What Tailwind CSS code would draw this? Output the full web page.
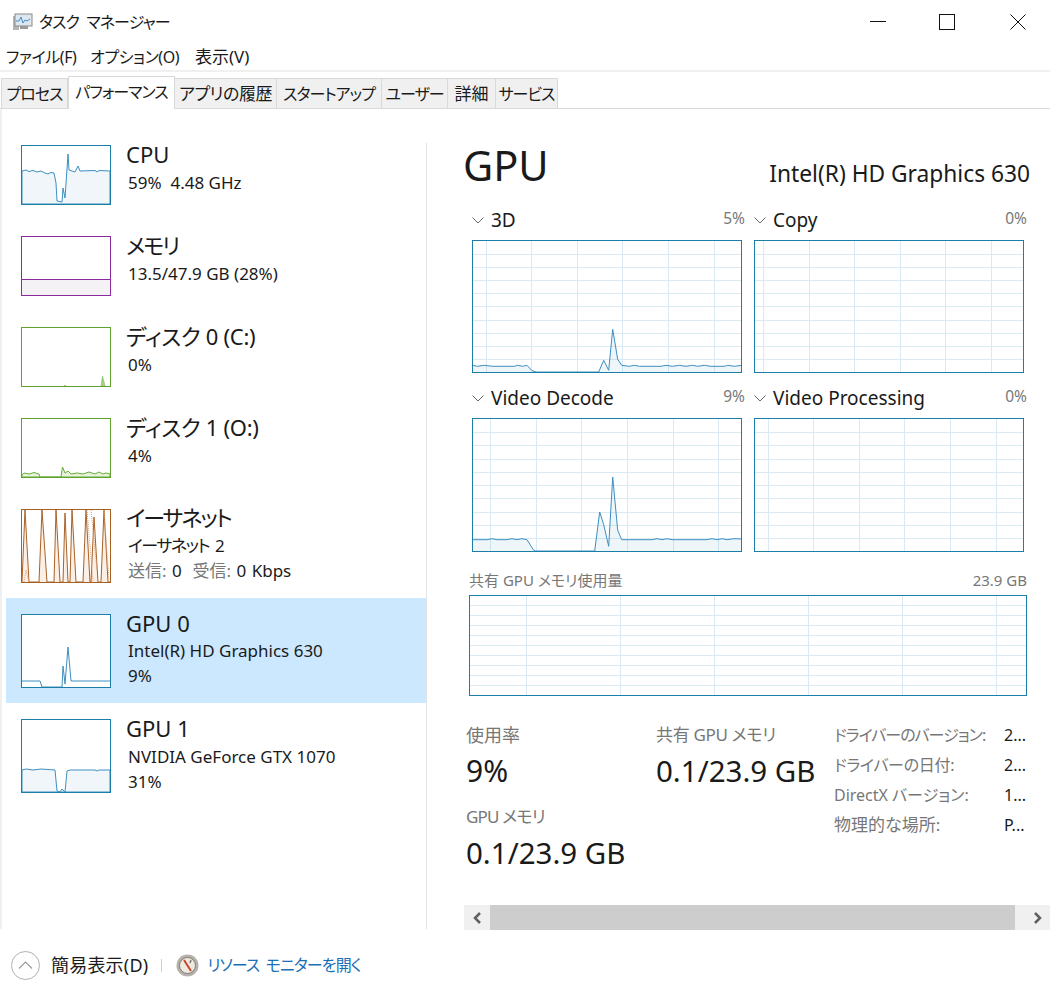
<!DOCTYPE html>
<html lang="ja">
<head>
<meta charset="UTF-8">
<title>タスク マネージャー</title>
<script src="https://cdn.jsdelivr.net/npm/@tailwindcss/browser@4"></script>
</head>
<body class="bg-white text-[#1a1a1a] font-['Noto_Sans','Noto_Sans_CJK_JP',sans-serif] [font-feature-settings:'palt']">
<div class="w-[1050px] h-[1000px] overflow-hidden flex flex-col">

  <!-- title bar -->
  <div class="h-[43px] flex items-center shrink-0">
    <svg class="ml-[12px] w-[21px] h-[21px]" viewBox="0 0 21 21">
      <rect x="1" y="5" width="6" height="14" fill="#b5b5b5"/>
      <rect x="3" y="3" width="17" height="12" fill="#dfe6ec" stroke="#8a8a8a"/>
      <path d="M4 10l3 0 2-4 2 6 2-3 2 1 3-2" fill="none" stroke="#3a8fd0"/>
      <path d="M8 15h8v3H8z" fill="#9a9a9a"/>
    </svg>
    <span class="ml-[6px] text-[16px] leading-[20px] tracking-[-0.9px] [word-spacing:4px]">タスク マネージャー</span>
    <div class="ml-auto flex items-center">
      <svg class="w-[16px] h-[16px] mr-[53px]" viewBox="0 0 16 16"><path d="M0 7.500h16" stroke="#111"/></svg>
      <svg class="w-[16px] h-[16px] mr-[55px]" viewBox="0 0 16 16"><rect x=".5" y=".5" width="15" height="15" fill="none" stroke="#111"/></svg>
      <svg class="w-[16px] h-[16px] mr-[24px]" viewBox="0 0 16 16"><path d="M.5.5l15 15M15.500.5l-15 15" stroke="#111"/></svg>
    </div>
  </div>

  <!-- menu -->
  <div class="h-[29px] flex items-center pl-[6px] text-[16px] leading-[20px] shrink-0 border-b-2 border-[#f0f0f0] whitespace-nowrap">
    <span class="w-[84px] tracking-[-0.4px]">ファイル(F)</span><span class="w-[105px] tracking-[-0.4px]">オプション(O)</span><span class="text-[17px]">表示(V)</span>
  </div>

  <!-- tabs -->
  <div class="h-[37px] flex items-end pl-[1px] text-[16px] leading-[20px] border-b border-[#d9d9d9] shrink-0 whitespace-nowrap">
    <div class="w-[67px] h-[30px] flex items-center justify-center bg-[#f0f0f0] border border-[#d9d9d9] border-b-0 tracking-[-1px]">プロセス</div>
    <div class="w-[107px] h-[33px] -mb-px flex items-center justify-center bg-white border border-[#d9d9d9] border-b-0 pb-[3px] tracking-[-1px]">パフォーマンス</div>
    <div class="w-[102px] h-[30px] flex items-center justify-center bg-[#f0f0f0] border-r border-t border-[#d9d9d9] text-[17px] tracking-[-0.5px]">アプリの履歴</div>
    <div class="w-[105px] h-[30px] flex items-center justify-center bg-[#f0f0f0] border-r border-t border-[#d9d9d9] tracking-[-1px]">スタートアップ</div>
    <div class="w-[66px] h-[30px] flex items-center justify-center bg-[#f0f0f0] border-r border-t border-[#d9d9d9] tracking-[-1px]">ユーザー</div>
    <div class="w-[48px] h-[30px] flex items-center justify-center bg-[#f0f0f0] border-r border-t border-[#d9d9d9] text-[17px]">詳細</div>
    <div class="w-[62px] h-[30px] flex items-center justify-center bg-[#f0f0f0] border-r border-t border-[#d9d9d9] tracking-[-1px]">サービス</div>
  </div>

  <!-- content -->
  <div class="h-[820px] flex shrink-0 border-l-2 border-[#f0f0f0]">

    <!-- sidebar -->
    <div class="w-[424px] pt-[20px] pl-[4px] shrink-0">
      <div class="flex px-[15px] pt-[16px] h-[91px]">
        <svg class="w-[90px] h-[60px] shrink-0" viewBox="0 0 90 60">
          <path d="M1 26L5 25 8 26.500 12 25.500 16 27 20 26 24 28 27 29 30 27.500 33 28 35 38 36 56 41 57 42 43 44 53 47 9 48 25 54 27 57 21 59 26 74 25.500 76 27 78 25.500 89 26V59H1Z" fill="#f1f6fa" stroke="#3d8fc0"/>
          <rect x=".5" y=".5" width="89" height="59" fill="none" stroke="#1b7ea6"/>
        </svg>
        <div class="ml-[15px]">
          <div class="-mt-[3px] text-[22px] leading-[24px]">CPU</div>
          <div class="mt-[7px] ml-[2px] text-[17px] leading-[20px]">59%&nbsp; 4.48 GHz</div>
        </div>
      </div>
      <div class="flex px-[15px] pt-[16px] h-[91px]">
        <svg class="w-[90px] h-[60px] shrink-0" viewBox="0 0 90 60">
          <rect x=".5" y="43.500" width="89" height="16" fill="#f4f2f4" stroke="#8b2a9e"/>
          <rect x=".5" y=".5" width="89" height="59" fill="none" stroke="#8b2a9e"/>
        </svg>
        <div class="ml-[15px]">
          <div class="-mt-[3px] text-[22px] leading-[24px] tracking-[-2px]">メモリ</div>
          <div class="mt-[7px] ml-[2px] text-[17px] leading-[20px]">13.5/47.9 GB (28%)</div>
        </div>
      </div>
      <div class="flex px-[15px] pt-[16px] h-[91px]">
        <svg class="w-[90px] h-[60px] shrink-0" viewBox="0 0 90 60">
          <path d="M80 59l1.500-10 2.500 10zM43 59l1-1 1 1z" fill="#a7d08c" stroke="#7dbb55" stroke-width=".6"/>
          <rect x=".5" y=".5" width="89" height="59" fill="none" stroke="#5fa32e"/>
        </svg>
        <div class="ml-[15px]">
          <div class="-mt-[3px] text-[22px] leading-[24px] tracking-[-0.3px]">ディスク 0 (C:)</div>
          <div class="mt-[7px] ml-[2px] text-[17px] leading-[20px]">0%</div>
        </div>
      </div>
      <div class="flex px-[15px] pt-[16px] h-[91px]">
        <svg class="w-[90px] h-[60px] shrink-0" viewBox="0 0 90 60">
          <path d="M1 57L3 55 8 56 13 54.500 18 56 19 59 40 59 41.500 49 44 55 47 53 50 56 56 55 62 56 68 54 74 56 78 54 82 56 85 55 89 56V59H1Z" fill="#e6f2dc" stroke="#6aad3a"/>
          <rect x=".5" y=".5" width="89" height="59" fill="none" stroke="#5fa32e"/>
        </svg>
        <div class="ml-[15px]">
          <div class="-mt-[3px] text-[22px] leading-[24px] tracking-[-0.3px]">ディスク 1 (O:)</div>
          <div class="mt-[7px] ml-[2px] text-[17px] leading-[20px]">4%</div>
        </div>
      </div>
      <div class="flex px-[15px] pt-[16px] h-[105px]">
        <svg class="w-[90px] h-[74px] shrink-0" viewBox="0 0 90 74">
          <path d="M1 73L4 1 8 73 18 73 21 1 26 73 33 73 35 1 39 73 42 73 44 4 47 73 49 73 51 1 55 73 62 73 65 1 69 73 70 73 73 8 77 73 80 73 83 1 87 73H89" fill="#fcf0e6" stroke="#a8622a"/>
          <path d="M66 1l6 72M70 1l6 60M83 1l5 70M3 73l2-12 3 12" fill="none" stroke="#e0a070" stroke-dasharray="1 1"/>
          <rect x=".5" y=".5" width="89" height="73" fill="none" stroke="#a7601f"/>
        </svg>
        <div class="ml-[15px]">
          <div class="-mt-[4px] text-[22px] leading-[24px] tracking-[-2px]">イーサネット</div>
          <div class="mt-[7px] ml-[2px] text-[17px] leading-[20px] tracking-[-1.5px] [word-spacing:3px]">イーサネット 2</div>
          <div class="mt-[5px] ml-[2px] text-[17px] leading-[20px] text-[#777] [word-spacing:1px]">送信: <span class="text-[#1a1a1a]">0</span>&nbsp; 受信: <span class="text-[#1a1a1a]">0 Kbps</span></div>
        </div>
      </div>
      <div class="flex px-[15px] pt-[16px] h-[105px] bg-[#cce8ff]">
        <svg class="w-[90px] h-[74px] shrink-0" viewBox="0 0 90 74">
          <rect x=".5" y=".5" width="89" height="73" fill="#fff"/>
          <path d="M1 67H19L21 73H41L42 52 44 70 47 33 50 67H89" fill="none" stroke="#3d8fc0"/>
          <rect x=".5" y=".5" width="89" height="73" fill="none" stroke="#1b7ea6"/>
        </svg>
        <div class="ml-[15px]">
          <div class="-mt-[3px] text-[22px] leading-[24px]">GPU 0</div>
          <div class="mt-[6px] ml-[2px] text-[17px] leading-[20px]">Intel(R) HD Graphics 630</div>
          <div class="mt-[5px] ml-[2px] text-[17px] leading-[20px]">9%</div>
        </div>
      </div>
      <div class="flex px-[15px] pt-[16px] h-[105px]">
        <svg class="w-[90px] h-[74px] shrink-0" viewBox="0 0 90 74">
          <path d="M1 51L5 50 12 51 20 50 34 51 36 72 39 73 41 70 44 73 46 52 49 51 74 51 76 52 78 51 89 51V73H1Z" fill="#f1f6fa" stroke="#3d8fc0"/>
          <rect x=".5" y=".5" width="89" height="73" fill="none" stroke="#1b7ea6"/>
        </svg>
        <div class="ml-[15px]">
          <div class="-mt-[3px] text-[22px] leading-[24px]">GPU 1</div>
          <div class="mt-[7px] ml-[2px] text-[17px] leading-[20px]">NVIDIA GeForce GTX 1070</div>
          <div class="mt-[5px] ml-[2px] text-[17px] leading-[20px]">31%</div>
        </div>
      </div>
    </div>

    <!-- right pane -->
    <div class="w-[624px] shrink-0 flex flex-col">
      <div class="flex-1 mt-[34px] border-l border-[#e3e3e3] pl-[37px] relative">
        <div class="flex items-baseline justify-between pr-[20px] -mt-[5px]">
          <div class="-ml-[1px] text-[41.5px] leading-[54px]">GPU</div>
          <div class="text-[22.75px] leading-[30px] translate-y-[1px]">Intel(R) HD Graphics 630</div>
        </div>

        <!-- engine charts -->
        <div class="mt-[13px] ml-[8px] grid grid-cols-[270px_270px] gap-x-[12px]">
          <div class="h-[178px]">
            <div class="h-[35px] pb-[5px] flex items-center text-[19px] leading-[26px]">
              <svg class="w-[12px] h-[7px] mr-[7px]" viewBox="0 0 12 7"><path d="M.5.5L6 6 11.500.5" fill="none" stroke="#666"/></svg>3D
              <span class="ml-auto mr-[-3px] -mt-[4px] text-[15.5px] text-[#777]">5%</span>
            </div>
            <svg class="block w-[270px] h-[133px]" viewBox="0 0 270 133">
              <path d="M14.500 0V133M59.500 0V133M105.500 0V133M150.500 0V133M196.500 0V133M242.500 0V133M0 14.500H270M0 27.500H270M0 40.500H270M0 53.500H270M0 66.500H270M0 80.500H270M0 93.500H270M0 106.500H270M0 119.500H270" stroke="#d9eaf4" fill="none"/>
              <path d="M0 125.300L5.700 126.300 12.300 125.300 20.700 126.300 42.300 126.300 45.700 125.300 50.700 126.300 55 125.300 60 130.700 64 132 126.700 132 131.700 120.300 136.700 130.300 140.700 89.300 145.700 119.300 149.700 125.300 157.300 126.300 162.300 125.300 167.300 126.300 189 126.300 194 125.300 200.700 126.300 207.300 125.300 214 126.300 220.700 125.300 225.700 126.300 232.300 125.300 239 126.300 252.300 126.300 255.700 125.300 262.300 126.300 270 125.300V133H0Z" fill="#117dbb" fill-opacity=".07" stroke="#3d8fc0"/>
              <rect x=".5" y=".5" width="269" height="132" fill="none" stroke="#1b7ea6"/>
            </svg>
          </div>
          <div class="h-[178px]">
            <div class="h-[35px] pb-[5px] flex items-center text-[19px] leading-[26px]">
              <svg class="w-[12px] h-[7px] mr-[7px]" viewBox="0 0 12 7"><path d="M.5.5L6 6 11.500.5" fill="none" stroke="#666"/></svg>Copy
              <span class="ml-auto mr-[-3px] -mt-[4px] text-[15.5px] text-[#777]">0%</span>
            </div>
            <svg class="block w-[270px] h-[133px]" viewBox="0 0 270 133">
              <path d="M9.500 0V133M55.500 0V133M100.500 0V133M146.500 0V133M191.500 0V133M237.500 0V133M0 14.500H270M0 27.500H270M0 40.500H270M0 53.500H270M0 66.500H270M0 80.500H270M0 93.500H270M0 106.500H270M0 119.500H270" stroke="#d9eaf4" fill="none"/>
              <rect x=".5" y=".5" width="269" height="132" fill="none" stroke="#1b7ea6"/>
            </svg>
          </div>
          <div class="h-[182px]">
            <div class="h-[35px] pb-[5px] flex items-center text-[19px] leading-[26px]">
              <svg class="w-[12px] h-[7px] mr-[7px]" viewBox="0 0 12 7"><path d="M.5.5L6 6 11.500.5" fill="none" stroke="#666"/></svg>Video Decode
              <span class="ml-auto mr-[-3px] -mt-[4px] text-[15.5px] text-[#777]">9%</span>
            </div>
            <svg class="block w-[270px] h-[134px]" viewBox="0 0 270 134">
              <path d="M18.500 0V134M64.500 0V134M109.500 0V134M155.500 0V134M201.500 0V134M246.500 0V134M0 14.500H270M0 27.500H270M0 41.500H270M0 54.500H270M0 67.500H270M0 80.500H270M0 94.500H270M0 107.500H270M0 120.500H270" stroke="#d9eaf4" fill="none"/>
              <path d="M0 121.700L15 121.700 20 120.700 25 121.700 35 121.700 40 120.700 45 121.700 50 120.700 55 121.700 61.300 131.700 63.700 133 122.700 133 127.700 94 131.700 106.700 136.700 128.300 140.700 59 145.700 112.300 149.700 121.700 180 121.700 185 120.700 190 121.700 195 120.700 200 121.700 235 121.700 240 120.700 245 121.700 250 120.700 255 121.700 262 120.700 270 121V134H0Z" fill="#117dbb" fill-opacity=".07" stroke="#3d8fc0"/>
              <rect x=".5" y=".5" width="269" height="133" fill="none" stroke="#1b7ea6"/>
            </svg>
          </div>
          <div class="h-[182px]">
            <div class="h-[35px] pb-[5px] flex items-center text-[19px] leading-[26px]">
              <svg class="w-[12px] h-[7px] mr-[7px]" viewBox="0 0 12 7"><path d="M.5.5L6 6 11.500.5" fill="none" stroke="#666"/></svg>Video Processing
              <span class="ml-auto mr-[-3px] -mt-[4px] text-[15.5px] text-[#777]">0%</span>
            </div>
            <svg class="block w-[270px] h-[134px]" viewBox="0 0 270 134">
              <path d="M14.500 0V134M59.500 0V134M105.500 0V134M150.500 0V134M196.500 0V134M242.500 0V134M0 14.500H270M0 27.500H270M0 41.500H270M0 54.500H270M0 67.500H270M0 80.500H270M0 94.500H270M0 107.500H270M0 120.500H270" stroke="#d9eaf4" fill="none"/>
              <rect x=".5" y=".5" width="269" height="133" fill="none" stroke="#1b7ea6"/>
            </svg>
          </div>
        </div>

        <!-- shared memory chart -->
        <div class="flex justify-between w-[558px] ml-[5px] h-[30px] items-center text-[15px] text-[#777]">
          <span>共有 GPU メモリ使用量</span><span>23.9 GB</span>
        </div>
        <svg class="block ml-[5px] w-[558px] h-[101px]" viewBox="0 0 558 101">
          <path d="M57.500 0V101M151.500 0V101M245.500 0V101M339.500 0V101M433.500 0V101M527.500 0V101M0 10.500H558M0 20.500H558M0 30.500H558M0 40.500H558M0 50.500H558M0 60.500H558M0 70.500H558M0 80.500H558M0 90.500H558" stroke="#d9eaf4" fill="none"/>
          <rect x=".5" y=".5" width="557" height="100" fill="none" stroke="#1b7ea6"/>
        </svg>

        <!-- stats -->
        <div class="mt-[26px] flex">
          <div class="w-[190px] ml-[2px]">
            <div class="text-[18px] leading-[26px] text-[#777]">使用率</div>
            <div class="text-[30px] leading-[46px]">9%</div>
            <div class="mt-[10px] text-[17px] leading-[26px] text-[#777] tracking-[-0.8px]">GPU メモリ</div>
            <div class="text-[29.5px] leading-[46px] whitespace-nowrap">0.1/23.9 GB</div>
          </div>
          <div class="w-[178px]">
            <div class="text-[17px] leading-[26px] text-[#777] whitespace-nowrap tracking-[-0.3px]">共有 GPU メモリ</div>
            <div class="text-[29.5px] leading-[46px] whitespace-nowrap">0.1/23.9 GB</div>
          </div>
          <div class="grid grid-cols-[170px_auto] auto-rows-[30px] items-center text-[16px] leading-[22px] -mt-[2px] whitespace-nowrap">
            <span class="text-[#777] tracking-[-1px]">ドライバーのバージョン:</span><span>2...</span>
            <span class="text-[#777] tracking-[-0.3px]">ドライバーの日付:</span><span>2...</span>
            <span class="text-[#777]">DirectX バージョン:</span><span>1...</span>
            <span class="text-[#777] text-[17px]">物理的な場所:</span><span>P...</span>
          </div>
        </div>

        <!-- horizontal scrollbar -->
        <div class="absolute left-[37px] right-0 top-[762px] h-[25px] bg-[#f0f0f0] flex items-center">
          <svg class="ml-[8px] w-[10px] h-[12px]" viewBox="0 0 10 12"><path d="M8 1L3 6l5 5" fill="none" stroke="#606060" stroke-width="2.500"/></svg>
          <div class="ml-[8px] w-[525px] h-[25px] bg-[#cdcdcd]"></div>
          <svg class="ml-[18px] w-[10px] h-[12px]" viewBox="0 0 10 12"><path d="M2 1l5 5-5 5" fill="none" stroke="#606060" stroke-width="2.500"/></svg>
        </div>
      </div>
    </div>
  </div>

  <!-- footer -->
  <div class="flex-1 flex items-center pl-[11px] pt-[1px]">
    <svg class="w-[29px] h-[29px] shrink-0" viewBox="0 0 29 29">
      <circle cx="14.500" cy="14.500" r="14" fill="none" stroke="#b0b0b0"/>
      <path d="M8 17.500l6.500-6.500 6.500 6.500" fill="none" stroke="#9a9a9a" stroke-width="1.200"/>
    </svg>
    <span class="ml-[11px] text-[18px] leading-[24px] tracking-[0.2px]">簡易表示(D)</span>
    <span class="ml-[13px] w-px h-[13px] bg-[#cfcfcf]"></span>
    <svg class="ml-[14px] w-[23px] h-[23px] shrink-0" viewBox="0 0 23 23">
      <circle cx="11.500" cy="11.500" r="11" fill="#b5b1aa"/>
      <circle cx="11.500" cy="11.500" r="8" fill="#efe9df" stroke="#7f7b74"/>
      <path d="M8 6l7 11" stroke="#c8452d" stroke-width="2"/>
      <path d="M15 6l-1 3" stroke="#777" stroke-width="1.500"/>
    </svg>
    <span class="ml-[8px] text-[16px] leading-[24px] text-[#1b6fb5] tracking-[-0.9px] [word-spacing:3px]">リソース モニターを開く</span>
  </div>
</div>
</body>
</html>
